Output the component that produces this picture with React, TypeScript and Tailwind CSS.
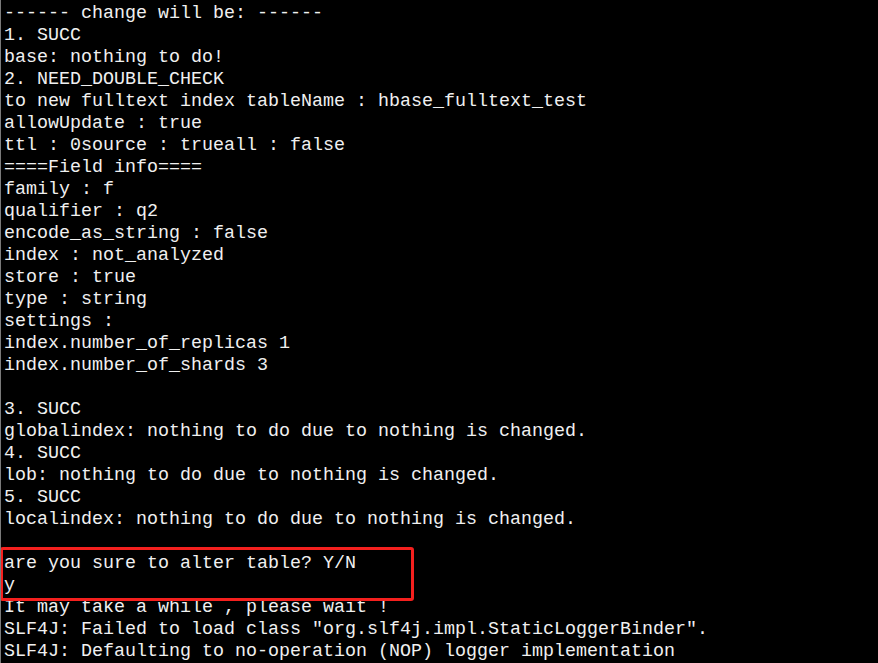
import React from "react";

const lines = [
  "------ change will be: ------",
  "1. SUCC",
  "base: nothing to do!",
  "2. NEED_DOUBLE_CHECK",
  "to new fulltext index tableName : hbase_fulltext_test",
  "allowUpdate : true",
  "ttl : 0source : trueall : false",
  "====Field info====",
  "family : f",
  "qualifier : q2",
  "encode_as_string : false",
  "index : not_analyzed",
  "store : true",
  "type : string",
  "settings :",
  "index.number_of_replicas 1",
  "index.number_of_shards 3",
  "",
  "3. SUCC",
  "globalindex: nothing to do due to nothing is changed.",
  "4. SUCC",
  "lob: nothing to do due to nothing is changed.",
  "5. SUCC",
  "localindex: nothing to do due to nothing is changed.",
  "",
  "are you sure to alter table? Y/N",
  "y",
  "It may take a while , please wait !",
  'SLF4J: Failed to load class "org.slf4j.impl.StaticLoggerBinder".',
  "SLF4J: Defaulting to no-operation (NOP) logger implementation",
];

export default function App() {
  return (
    <div className="relative w-[878px] h-[663px] overflow-hidden bg-black border-l border-[#7a7a7a]">
      <div
        className="pt-[3px] pl-[3px] text-[#f0f0f0] text-[18.33px] leading-[22px] whitespace-pre"
        style={{ fontFamily: '"Liberation Mono", "Courier New", monospace' }}
      >
        {lines.map((l, i) => (
          <div key={i} className="h-[22px]">
            {l === "" ? "\u00a0" : l}
          </div>
        ))}
      </div>
      <div className="absolute left-[-1px] top-[547px] w-[414px] h-[54px] border-[3px] border-[#f5201e] rounded-[3px]" />
    </div>
  );
}
